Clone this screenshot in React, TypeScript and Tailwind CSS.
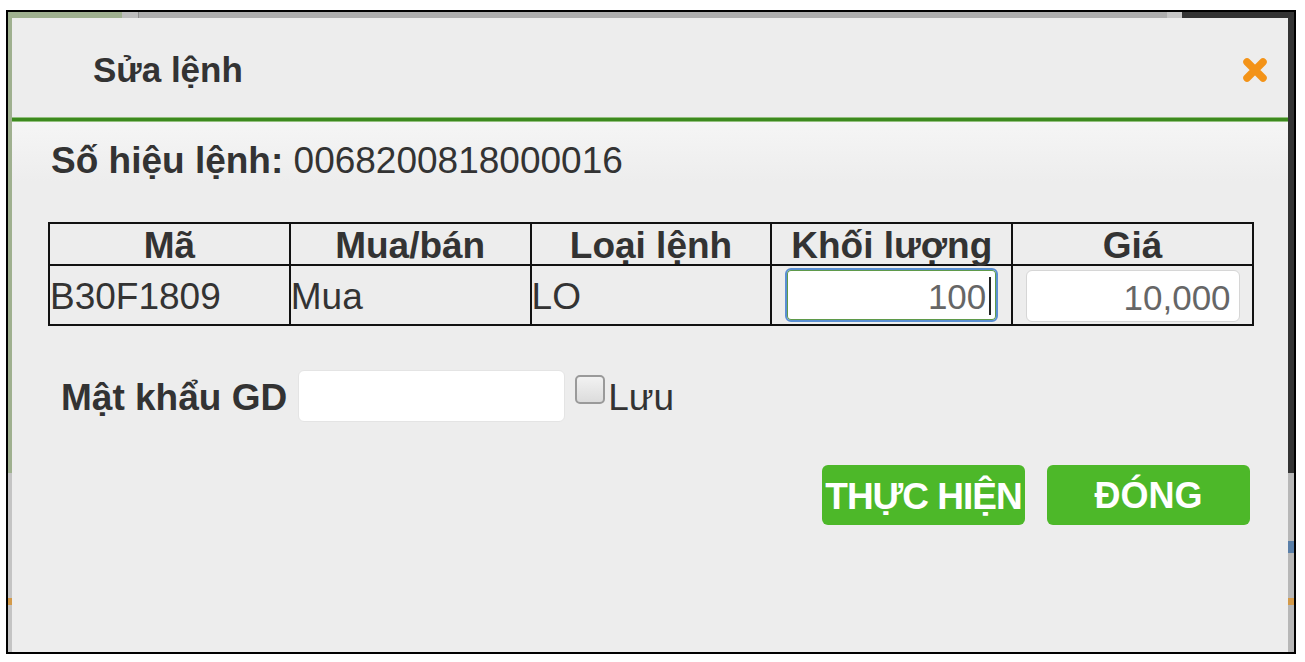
import React from 'react';

const cols = ['Mã', 'Mua/bán', 'Loại lệnh', 'Khối lượng', 'Giá'];

function CloseIcon() {
    return (
        <svg width="28" height="26" viewBox="0 0 28 26" aria-hidden="true">
            <path d="M6 5 L22 21 M22 5 L6 21" stroke="#f39318" strokeWidth="7.5" strokeLinecap="round" />
        </svg>
    );
}

export default function App() {
    return (
        <div className="min-h-screen bg-white pt-[10px] pl-[6px] font-['Liberation_Sans',Arial,sans-serif] text-[#333]">
            <div className="w-[1290px] h-[644px] border-2 border-black flex flex-col overflow-hidden">
                {/* page behind the dialog, top edge */}
                <div className="h-[6px] flex shrink-0">
                    <div className="w-[114px] shrink-0 bg-[#9fb08f]" />
                    <div className="w-[16px] shrink-0 bg-[#bdbdbd]" />
                    <div className="w-[1px] shrink-0 bg-[#8e8e8e]" />
                    <div className="flex-1 bg-[#aeaeae]" />
                    <div className="w-[15px] shrink-0 bg-[#c6c6c6]" />
                    <div className="w-[112px] shrink-0 bg-[#333]" />
                </div>

                <div className="flex flex-1 min-h-0">
                    <div className="w-[4px] shrink-0 flex flex-col">
                        <div className="h-[455px] bg-[#9fb08f]" />
                        <div className="flex-1 bg-[#c4c4c4] flex flex-col">
                            <div className="h-[125px]" />
                            <div className="h-[7px] bg-[#d39a4a]" />
                        </div>
                    </div>

                    {/* dialog */}
                    <div className="flex-1 min-w-0 bg-[#ededed] flex flex-col">
                        <div className="h-[99px] flex items-center justify-between pl-[81px] pr-[19px] pt-[4px]">
                            <h1 className="text-[35px] font-bold leading-none">Sửa lệnh</h1>
                            <CloseIcon />
                        </div>
                        <div className="h-[5px] bg-[#3d8a1e] border-y border-[#93c07f]" />

                        <div className="flex-1 bg-[linear-gradient(#f5f5f5,#ededed_60px)] pl-[36px]">
                            <p className="mt-[20px] ml-[3px] text-[37px] leading-none">
                                <span className="font-bold">Số hiệu lệnh:</span> 0068200818000016
                            </p>

                            <table className="mt-[43px] w-[1206px] table-fixed border-collapse border-2 border-[#111] text-[37px] leading-none">
                                <thead>
                                    <tr>
                                        {cols.map((c) => (
                                            <th key={c} className="h-[42px] pt-[3px] border-2 border-[#111] font-bold text-center align-middle">
                                                {c}
                                            </th>
                                        ))}
                                    </tr>
                                </thead>
                                <tbody>
                                    <tr>
                                        <td className="h-[60px] pt-[3px] border-2 border-[#111] px-0 align-middle">B30F1809</td>
                                        <td className="pt-[3px] border-2 border-[#111] px-0 align-middle">Mua</td>
                                        <td className="pt-[3px] border-2 border-[#111] px-0 align-middle">LO</td>
                                        <td className="border-2 border-[#111] align-middle">
                                            <div className="relative w-[213px] h-[54px] mx-auto">
                                                <input
                                                    readOnly
                                                    value="100"
                                                    className="w-full h-full pt-[3px] bg-white rounded-[6px] border-2 border-[#5a8fd2] shadow-[inset_0_0_0_1px_#5f9a4a] text-right pr-[10px] text-[35px] text-[#666] outline-none"
                                                />
                                                <span className="absolute right-[7px] top-[9px] w-[2px] h-[38px] bg-[#222]" />
                                            </div>
                                        </td>
                                        <td className="border-2 border-[#111] align-middle">
                                            <input
                                                readOnly
                                                value="10,000"
                                                className="block mx-auto mt-[2px] w-[214px] h-[52px] pt-[3px] bg-white rounded-[6px] border border-[#d6d6d6] text-right pr-[8px] text-[35px] text-[#666] outline-none"
                                            />
                                        </td>
                                    </tr>
                                </tbody>
                            </table>

                            <div className="mt-[44px] ml-[13px] flex items-center">
                                <label className="text-[37px] font-bold leading-none pt-[3px]">Mật khẩu GD</label>
                                <input
                                    type="password"
                                    className="ml-[11px] w-[267px] h-[52px] bg-white rounded-[6px] border border-[#e4e4e4] outline-none"
                                />
                                <input
                                    type="checkbox"
                                    className="ml-[10px] appearance-none w-[30px] h-[29px] rounded-[5px] border-2 border-[#9a9a9a] bg-[linear-gradient(#f2f2f2,#dcdcdc)] -translate-y-[7px]"
                                />
                                <span className="ml-[3px] text-[37px] leading-none pt-[3px]">Lưu</span>
                            </div>

                            <div className="mt-[43px] pr-[38px] flex justify-end gap-[22px]">
                                <button className="w-[203px] h-[60px] pt-[2px] rounded-[6px] bg-[#4db829] text-white text-[37px] font-bold leading-none tracking-[-1px] whitespace-nowrap">
                                    THỰC HIỆN
                                </button>
                                <button className="w-[203px] h-[60px] pt-[2px] rounded-[6px] bg-[#4db829] text-white text-[36px] font-bold leading-none">
                                    ĐÓNG
                                </button>
                            </div>
                        </div>
                    </div>

                    <div className="w-[6px] shrink-0 flex flex-col">
                        <div className="h-[455px] bg-[#333]" />
                        <div className="flex-1 bg-[#b7b7b7] flex flex-col">
                            <div className="h-[68px]" />
                            <div className="h-[12px] bg-[#5a7fa8]" />
                            <div className="h-[45px]" />
                            <div className="h-[7px] bg-[#d39a4a]" />
                        </div>
                    </div>
                </div>
            </div>
        </div>
    );
}
